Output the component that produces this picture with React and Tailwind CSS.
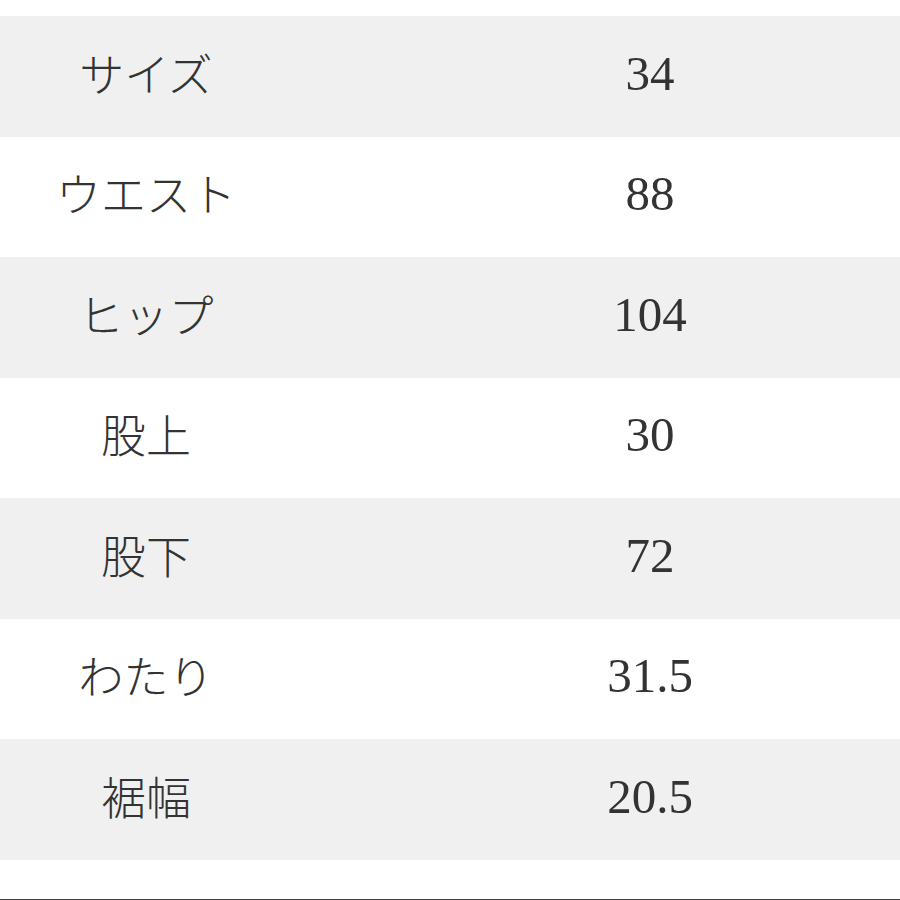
export default function App() {
  const rows = [
    ["サイズ", "34"],
    ["ウエスト", "88"],
    ["ヒップ", "104"],
    ["股上", "30"],
    ["股下", "72"],
    ["わたり", "31.5"],
    ["裾幅", "20.5"],
  ];
  return (
    <div className="w-[900px] h-[900px] bg-white flex flex-col overflow-hidden">
      <div className="h-[16px] shrink-0" />
      {rows.map(([k, v], i) => (
        <div
          key={k}
          className={`h-[120.5px] shrink-0 flex items-center ${i % 2 === 0 ? "bg-[#f0f0f0]" : "bg-white"}`}
        >
          <div
            className="w-[292px] text-center text-[45px] font-light leading-none text-[#333333] pb-[8px]"
            style={{ fontFamily: '"Noto Sans CJK JP", sans-serif' }}
          >
            {k}
          </div>
          <div className="w-[108px]" />
          <div
            className="w-[500px] text-center text-[49px] leading-none text-[#333333] pb-[6px]"
            style={{ fontFamily: '"Liberation Serif", serif' }}
          >
            {v}
          </div>
        </div>
      ))}
      <div className="flex-1" />
      <div className="h-[1px] shrink-0 bg-[#444444]" />
    </div>
  );
}
